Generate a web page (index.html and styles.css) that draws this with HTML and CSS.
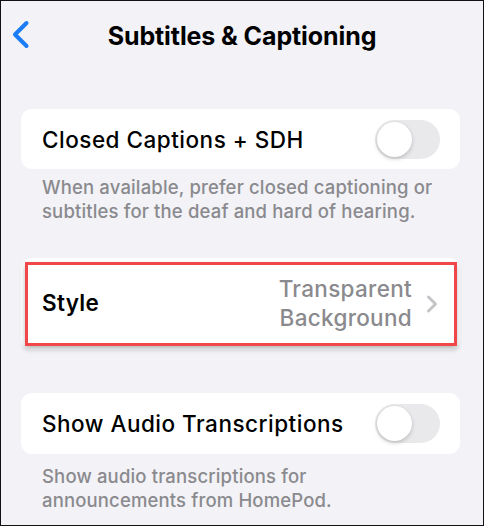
FILE: index.html
```html
<!DOCTYPE html>
<html>
<head>
<meta charset="utf-8">
<link rel="stylesheet" href="styles.css">
</head>
<body>
<div class="screen">
  <header class="nav">
    <div class="nav-left">
      <svg class="back" width="20" height="30" viewBox="0 0 20 30"><path d="M15.5 3 L4 14.5 L15.5 26" fill="none" stroke="#1a7cf6" stroke-width="4" stroke-linecap="round" stroke-linejoin="round"/></svg>
    </div>
    <h1 class="title">Subtitles &amp; Captioning</h1>
    <div class="nav-right"></div>
  </header>

  <section class="card row first">
    <span class="label">Closed Captions + SDH</span>
    <span class="toggle"><span class="knob"></span></span>
  </section>
  <p class="footnote">When available, prefer closed captioning or subtitles for the deaf and hard of hearing.</p>

  <section class="card row style-card">
    <span class="label strong">Style</span>
    <span class="value-wrap">
      <span class="value">Transparent<br>Background</span>
      <svg class="chev" width="12" height="20" viewBox="0 0 12 20"><path d="M2.5 3 L9.5 10 L2.5 17" fill="none" stroke="#c5c5c9" stroke-width="3" stroke-linecap="round" stroke-linejoin="round"/></svg>
    </span>
    <span class="highlight"></span>
  </section>

  <section class="card row third">
    <span class="label">Show Audio Transcriptions</span>
    <span class="toggle"><span class="knob"></span></span>
  </section>
  <p class="footnote last">Show audio transcriptions for<br>announcements from HomePod.</p>
</div>
</body>
</html>
```

FILE: styles.css
```css
* { box-sizing: border-box; }
html, body { margin: 0; padding: 0; }
body {
  font-family: "Inter", "Noto Sans", sans-serif;
  -webkit-font-smoothing: antialiased;
}
.screen {
  width: 484px;
  height: 526px;
  border: 1px solid #111;
  background: #f2f2f7;
  padding: 0 23px 0 20px;
  overflow: hidden;
}
.nav {
  height: 70px;
  display: grid;
  grid-template-columns: 1fr auto 1fr;
  align-items: center;
  margin: 0 -23px 0 -20px;
}
.nav-left { padding-left: 10px; display: flex; align-items: center; }
.back { display: block; margin-top: -2px; }
.title {
  margin: 0;
  font-size: 25px;
  font-weight: 700;
  color: #000;
  letter-spacing: -0.1px;
}
.card {
  background: #fff;
  border-radius: 11px;
  position: relative;
  height: 60px;
}
.row {
  display: flex;
  align-items: center;
  justify-content: space-between;
  padding: 0 20px 0 21px;
}
.first { margin-top: 38px; }
.label {
  font-size: 22.5px;
  font-weight: 500;
  color: #000;
  letter-spacing: 0.5px;
}
.label.strong { font-weight: 600; letter-spacing: 0.3px; margin-top: -3px; }
.toggle {
  width: 65px;
  height: 39px;
  border-radius: 20px;
  background: #e9e9eb;
  position: relative;
  display: block;
  flex-shrink: 0;
}
.knob {
  position: absolute;
  left: 2px;
  top: 2px;
  width: 35px;
  height: 35px;
  border-radius: 50%;
  background: #fff;
  box-shadow: 0 2px 4px rgba(0,0,0,0.18), 0 0 1px rgba(0,0,0,0.1);
}
.footnote {
  margin: 6px 0 0 0;
  padding: 0 8px 0 21px;
  font-size: 18.5px;
  font-weight: 500;
  line-height: 24px;
  color: #8a8a8e;
  letter-spacing: 0.15px;
}
.footnote.last { margin-top: 10px; }
.style-card {
  height: 92px;
  margin-top: 35px;
}
.value-wrap {
  display: flex;
  align-items: center;
  gap: 14px;
  padding-right: 2px;
  margin-top: -2px;
}
.value {
  text-align: right;
  font-size: 22.5px;
  font-weight: 500;
  line-height: 29px;
  color: #8a8a8e;
  letter-spacing: 0.3px;
}
.chev { display: block; margin-top: 2px; }
.highlight {
  position: absolute;
  left: 4px;
  right: 3px;
  top: 4px;
  bottom: 4px;
  border: 3px solid #f2474a;
  box-shadow: 0 3px 5px rgba(0,0,0,0.28);
  pointer-events: none;
}
.third { margin-top: 43px; height: 61px; }
```
